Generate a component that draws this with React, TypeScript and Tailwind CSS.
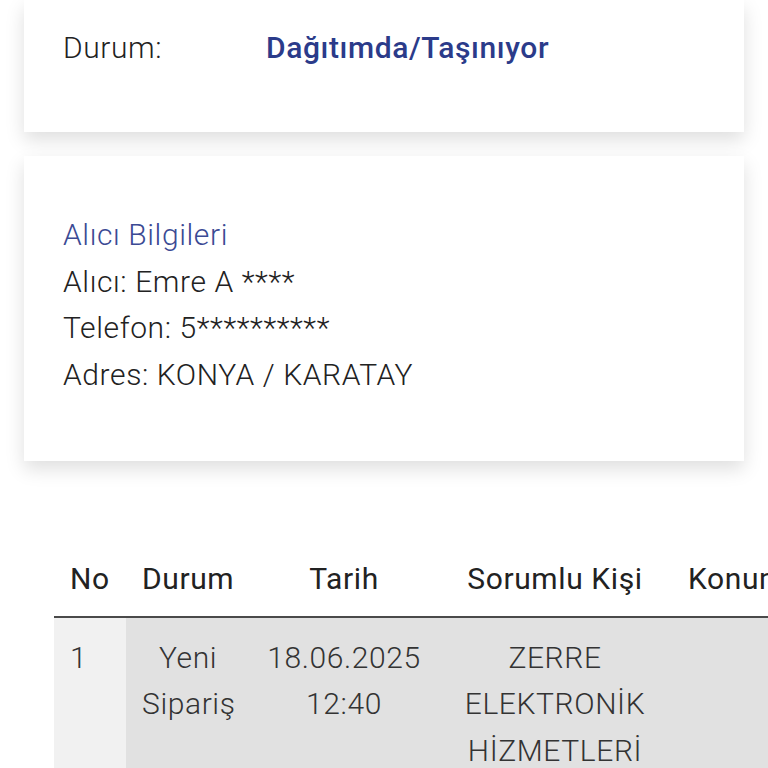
import React from 'react'

const rows = [
  {
    no: '1',
    durum: ['Yeni', 'Sipariş'],
    tarih: ['18.06.2025', '12:40'],
    kisi: ['ZERRE', 'ELEKTRONİK', 'HİZMETLERİ'],
    konum: [] as string[],
  },
]

export default function App() {
  return (
    <div className="min-h-screen w-[768px] overflow-hidden bg-white font-['Roboto',sans-serif] text-[30px] tracking-[0.6px] text-[#222]">
      {/* Durum kartı */}
      <div className="mx-6 bg-white pl-[39px] pt-[25px] pb-[62px] shadow-[0_8px_18px_rgba(0,0,0,0.13)]">
        <div className="flex items-center leading-[45px]">
          <span className="w-[203px] font-light">Durum:</span>
          <span className="font-medium text-[#2b3b8a]">Dağıtımda/Taşınıyor</span>
        </div>
      </div>

      {/* Alıcı bilgileri */}
      <div className="mx-6 mt-6 bg-white pl-[39px] pt-[56px] pb-[62px] shadow-[0_8px_18px_rgba(0,0,0,0.13)]">
        <div className="font-light leading-[46.7px]">
          <div className="text-[#3b4a94]">Alıcı Bilgileri</div>
          <div>Alıcı: Emre A ****</div>
          <div>Telefon: 5**********</div>
          <div>Adres: KONYA / KARATAY</div>
        </div>
      </div>

      {/* Hareket tablosu */}
      <div className="mt-[91px] overflow-hidden pl-[54px]">
        <table className="w-[860px] table-fixed border-collapse text-center">
          <colgroup>
            <col className="w-[72px]" />
            <col className="w-[124px]" />
            <col className="w-[188px]" />
            <col className="w-[234px]" />
            <col className="w-[242px]" />
          </colgroup>
          <thead>
            <tr className="border-b-2 border-[#4a4a4a]">
              <th className="px-4 pt-[4px] pb-[15px] text-left font-normal leading-[45px]">No</th>
              <th className="px-4 pt-[4px] pb-[15px] font-normal leading-[45px]">Durum</th>
              <th className="px-4 pt-[4px] pb-[15px] font-normal leading-[45px]">Tarih</th>
              <th className="px-4 pt-[4px] pb-[15px] font-normal leading-[45px]">Sorumlu Kişi</th>
              <th className="px-4 pt-[4px] pb-[15px] text-left font-normal leading-[45px]">Konum</th>
            </tr>
          </thead>
          <tbody className="font-light leading-[46.5px] text-[#333]">
            {rows.map((r) => (
              <tr key={r.no} className="align-top">
                <td className="bg-[#f1f1f1] px-4 pt-[17px] pb-4 text-left">{r.no}</td>
                <td className="bg-[#e1e1e1] px-4 pt-[17px] pb-4">
                  {r.durum.map((t) => (
                    <div key={t}>{t}</div>
                  ))}
                </td>
                <td className="bg-[#e1e1e1] px-4 pt-[17px] pb-4">
                  {r.tarih.map((t) => (
                    <div key={t}>{t}</div>
                  ))}
                </td>
                <td className="bg-[#e1e1e1] px-4 pt-[17px] pb-4">
                  {r.kisi.map((t) => (
                    <div key={t}>{t}</div>
                  ))}
                </td>
                <td className="bg-[#e1e1e1] px-4 pt-[17px] pb-4 text-left">
                  {r.konum.map((t) => (
                    <div key={t}>{t}</div>
                  ))}
                </td>
              </tr>
            ))}
          </tbody>
        </table>
      </div>
    </div>
  )
}
